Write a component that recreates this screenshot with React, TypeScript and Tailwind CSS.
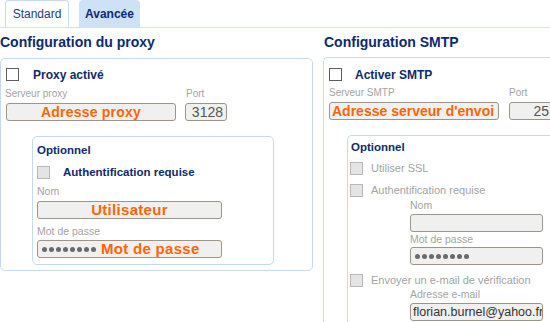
import React from "react";

const navy = "text-[#0c2b6e]";

function Check({ disabled = false }: { disabled?: boolean }) {
  return (
    <div
      className={
        disabled
          ? "w-[13px] h-[13px] shrink-0 border border-[#b8b8b8] bg-[#e4e4e4]"
          : "w-[13px] h-[13px] shrink-0 border border-[#5e5e5e] bg-white"
      }
    />
  );
}

function Dots() {
  return (
    <div className="flex items-center gap-[2px]">
      {Array.from({ length: 8 }).map((_, i) => (
        <div key={i} className="w-[5px] h-[5px] rounded-full bg-[#6a6a6a]" />
      ))}
    </div>
  );
}

function Field({ className, children }: { className: string; children?: React.ReactNode }) {
  return (
    <div
      className={
        "flex items-center overflow-hidden whitespace-nowrap rounded-[3px] border border-[#a09584] bg-[#f0f0f0] " +
        className
      }
    >
      {children}
    </div>
  );
}

export default function App() {
  return (
    <div className="w-[550px] h-[322px] overflow-hidden bg-white font-['Liberation_Sans',Arial,sans-serif]">
      {/* tabs */}
      <div className="flex items-end h-[28px] border-b border-[#d3e2f2]">
        <div className="ml-[5px] w-[64px] h-[27px] flex items-center justify-center rounded-t-[4px] border border-b-0 border-[#c9dbef] text-[12px] text-[#1d3b78]">
          Standard
        </div>
        <div className="ml-[10px] w-[61px] h-[27px] flex items-center justify-center rounded-t-[4px] bg-[#cfe1f4] text-[12px] font-bold text-[#0c2b6e]">
          Avancée
        </div>
      </div>

      <div className="flex">
        {/* proxy */}
        <div className="w-[313px] shrink-0">
          <div className={"h-[29px] pt-[6px] text-[14px] font-bold leading-[16px] " + navy}>
            Configuration du proxy
          </div>
          <div className="mt-[1px] h-[213px] rounded-[5px] border border-[#c6daef]">
            <div className="mt-[9px] ml-[5px] flex items-center h-[13px]">
              <Check />
              <span className={"ml-[14px] text-[12px] font-bold " + navy}>Proxy activé</span>
            </div>
            <div className="mt-[6px] flex h-[12px] items-center text-[10px] text-[#a3a3a3]">
              <span className="ml-[4px] w-[181px]">Serveur proxy</span>
              <span>Port</span>
            </div>
            <div className="mt-[4px] flex">
              <Field className="ml-[5px] w-[170px] h-[18px] justify-center">
                <span className="text-[14px] font-bold text-[#ff6600] tracking-[0.2px]">Adresse proxy</span>
              </Field>
              <Field className="ml-[9px] w-[42px] h-[18px] justify-end pr-[3px]">
                <span className="text-[14px] text-[#555]">3128</span>
              </Field>
            </div>

            <div className="mt-[15px] ml-[31px] w-[242px] h-[129px] rounded-[5px] border border-[#c6daef] pl-[4px]">
              <div className={"mt-[6px] text-[11.5px] font-bold leading-[14px] " + navy}>Optionnel</div>
              <div className="mt-[9px] flex items-center h-[13px]">
                <Check disabled />
                <span className={"ml-[13px] text-[11.5px] font-bold " + navy}>Authentification requise</span>
              </div>
              <div className="mt-[6px] h-[12px] leading-[12px] text-[10.5px] text-[#a3a3a3]">Nom</div>
              <Field className="mt-[4px] w-[185px] h-[18px] justify-center">
                <span className="text-[15px] font-bold text-[#ff6600] tracking-[0.3px]">Utilisateur</span>
              </Field>
              <div className="mt-[6px] h-[12px] leading-[12px] text-[10.5px] text-[#a3a3a3]">Mot de passe</div>
              <Field className="mt-[3px] w-[185px] h-[18px] pl-[4px]">
                <Dots />
                <span className="ml-[5px] text-[15px] font-bold text-[#ff6600] tracking-[0.3px]">Mot de passe</span>
              </Field>
            </div>
          </div>
        </div>

        {/* smtp */}
        <div className="ml-[10px] w-[260px] shrink-0">
          <div className={"h-[29px] pt-[6px] pl-[1px] text-[14px] font-bold leading-[16px] " + navy}>
            Configuration SMTP
          </div>
          <div className="h-[300px] rounded-tl-[5px] border-l border-t border-[#c6daef]">
            <div className="mt-[10px] ml-[5px] flex items-center h-[13px]">
              <Check />
              <span className={"ml-[13px] text-[12px] font-bold " + navy}>Activer SMTP</span>
            </div>
            <div className="mt-[5px] flex h-[12px] items-center text-[10px] text-[#a3a3a3]">
              <span className="ml-[5px] w-[180px]">Serveur SMTP</span>
              <span>Port</span>
            </div>
            <div className="mt-[4px] flex">
              <Field className="ml-[5px] w-[170px] h-[18px] pl-[2px]">
                <span className="text-[14px] font-bold text-[#ff6600]">Adresse serveur d'envoi</span>
              </Field>
              <Field className="ml-[10px] w-[44px] h-[18px] justify-end pr-[3px]">
                <span className="text-[14px] text-[#555]">25</span>
              </Field>
            </div>

            <div className="mt-[15px] ml-[23px] h-[200px] rounded-tl-[5px] border-l border-t border-[#c6daef] pl-[2px]">
              <div className={"mt-[4px] ml-[1px] text-[11.5px] font-bold leading-[14px] " + navy}>Optionnel</div>
              <div className="mt-[8px] flex items-center h-[13px]">
                <Check disabled />
                <span className="ml-[8px] text-[11px] text-[#a3a3a3]">Utiliser SSL</span>
              </div>
              <div className="mt-[9px] flex items-center h-[13px]">
                <Check disabled />
                <span className="ml-[8px] text-[11px] text-[#a3a3a3]">Authentification requise</span>
              </div>
              <div className="pl-[60px]">
                <div className="mt-[2px] h-[12px] leading-[12px] text-[10.5px] text-[#a3a3a3]">Nom</div>
                <Field className="mt-[3px] w-[133px] h-[18px]" />
                <div className="mt-[1px] h-[12px] leading-[12px] text-[10.5px] text-[#a3a3a3]">Mot de passe</div>
                <Field className="mt-[2px] w-[133px] h-[18px] pl-[4px]">
                  <Dots />
                </Field>
              </div>
              <div className="mt-[9px] flex items-center h-[13px]">
                <Check disabled />
                <span className="ml-[8px] text-[11px] text-[#a3a3a3]">Envoyer un e-mail de vérification</span>
              </div>
              <div className="pl-[60px]">
                <div className="mt-[1px] h-[12px] leading-[12px] text-[10.5px] text-[#a3a3a3]">Adresse e-mail</div>
                <Field className="mt-[3px] w-[133px] h-[18px] pl-[2px]">
                  <span className="text-[12.5px] text-[#333]">florian.burnel@yahoo.fr</span>
                </Field>
              </div>
            </div>
          </div>
        </div>
      </div>
    </div>
  );
}
